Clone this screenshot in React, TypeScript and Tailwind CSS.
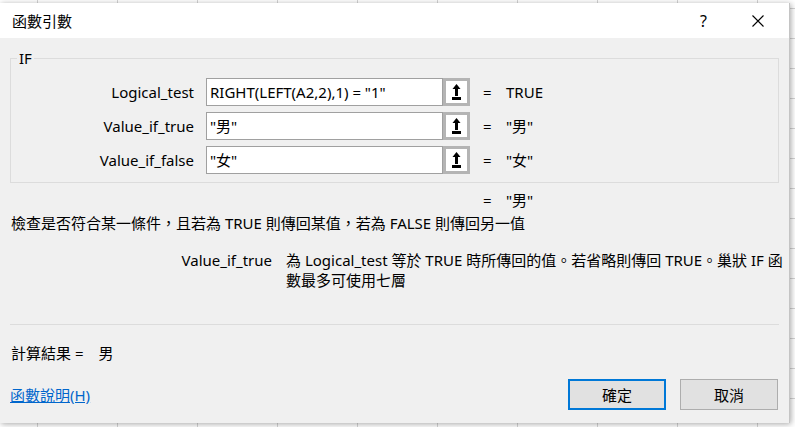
import React from 'react';

const FONT = "font-['Noto_Sans','Noto_Sans_CJK_TC',sans-serif]";

const RefButton: React.FC = () => (
  <div className="w-[27px] h-full border-[3px] border-[#b4b4b4] bg-white flex items-center justify-center">
    <svg width="9" height="16" viewBox="0 0 9 16">
      <polygon points="4.5,0 8.5,5 0.5,5" fill="#000" />
      <rect x="3" y="4" width="3" height="8" fill="#000" />
      <rect x="0" y="13" width="9" height="3" fill="#000" />
    </svg>
  </div>
);

const args = [
  { label: 'Logical_test', value: 'RIGHT(LEFT(A2,2),1) = "1"', result: 'TRUE' },
  { label: 'Value_if_true', value: '"男"', result: '"男"' },
  { label: 'Value_if_false', value: '"女"', result: '"女"' },
];

export default function App() {
  return (
    <div
      className={`w-[795px] h-[427px] overflow-hidden bg-white pt-[3px] text-[15px] leading-[20px] text-black ${FONT} bg-[linear-gradient(to_right,#d4d4d4_1px,transparent_1px),linear-gradient(to_bottom,#d4d4d4_1px,transparent_1px)] bg-[size:80px_30px] bg-[position:37px_8px]`}
    >
      <div className="w-[790px] h-[420px] bg-[#f0f0f0] flex flex-col shadow-[1px_1px_6px_rgba(0,0,0,0.35)] border-r border-[#c4c4c4]">
        {/* Title bar */}
        <div className="h-[35px] bg-white flex items-center shrink-0">
          <span className="ml-[12px]">函數引數</span>
          <span className="ml-auto mr-[45px] text-[16px]">?</span>
          <svg width="12" height="12" viewBox="0 0 12 12" className="mr-[25px]">
            <path d="M0.5 0.5 L11.5 11.5 M11.5 0.5 L0.5 11.5" stroke="#000" strokeWidth="1.1" />
          </svg>
        </div>

        {/* Arguments group */}
        <fieldset className="mx-[10px] mt-[10px] border border-[#dcdcdc] pt-[10px] pb-[8px] px-0">
          <legend className="ml-[6px] px-[2px]">IF</legend>
          <div className="flex flex-col gap-[6px]">
            {args.map((a) => (
              <div key={a.label} className="flex items-center h-[28px]">
                <span className="w-[183px] text-right">{a.label}</span>
                <div className="ml-[12px] w-[237px] h-full border border-[#a0a0a0] bg-white flex items-center px-[3px]">
                  {a.value}
                </div>
                <RefButton />
                <span className="ml-[13px] w-[23px]">=</span>
                <span>{a.result}</span>
              </div>
            ))}
          </div>
        </fieldset>

        <div className="mt-[7px] flex h-[20px]">
          <span className="ml-[483px] w-[23px]">=</span>
          <span>"男"</span>
        </div>

        <div className="mt-[3px] ml-[11px]">
          檢查是否符合某一條件，且若為 TRUE 則傳回某值，若為 FALSE 則傳回另一值
        </div>

        <div className="mt-[17px] flex">
          <span className="ml-[11px] w-[261px] text-right">Value_if_true</span>
          <span className="ml-[14px]">
            為 Logical_test 等於 TRUE 時所傳回的值。若省略則傳回 TRUE。巢狀 IF 函
            <br />
            數最多可使用七層
          </span>
        </div>

        <div className="mt-[34px] mx-[10px] h-px bg-[#dcdcdc]" />

        <div className="mt-[18px] ml-[11px] flex">
          <span>計算結果 =</span>
          <span className="ml-[15px]">男</span>
        </div>

        <div className="mt-[16px] flex items-center">
          <a className="ml-[10px] text-[#0066cc] underline cursor-pointer">函數說明(H)</a>
          <button className="ml-auto w-[98px] h-[31px] bg-[#e1e1e1] border-2 border-[#0078d7]">確定</button>
          <button className="ml-[14px] mr-[11px] w-[98px] h-[31px] bg-[#e1e1e1] border border-[#adadad]">取消</button>
        </div>
      </div>
    </div>
  );
}
